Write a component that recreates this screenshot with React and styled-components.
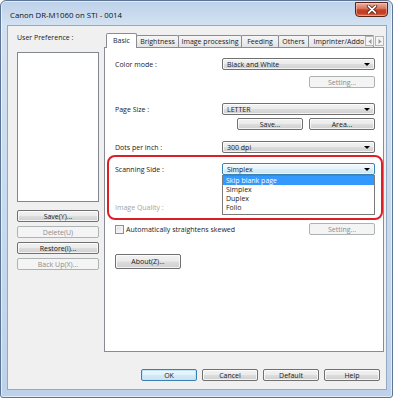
import React from 'react';
import styled, { createGlobalStyle, css } from 'styled-components';

const GlobalStyle = createGlobalStyle`
  html, body {
    margin: 0;
    padding: 0;
    background: #ffffff;
  }
  body {
    font-family: "Open Sans", "Liberation Sans", Arial, sans-serif;
    font-size: 7px;
    color: #1a1a1a;
  }
  * { box-sizing: border-box; }
`;

const Window = styled.div`
  width: 393px;
  height: 398px;
  display: flex;
  flex-direction: column;
  background: linear-gradient(180deg, #bcd1ea 0px, #d3e2f2 24px, #c6d9ee 60%, #bdd2ea 100%);
  border: 1px solid #5d7594;
  border-radius: 6px 6px 3px 3px;
  box-shadow: inset 0 0 0 1px rgba(255, 255, 255, 0.55);
`;

const TitleBar = styled.div`
  height: 24px;
  display: flex;
  align-items: flex-start;
  justify-content: space-between;
  padding: 0 4px 0 9px;
`;

const Title = styled.span`
  margin-top: 7px;
  font-size: 7.8px;
  line-height: 14px;
  color: #111;
`;

const CloseButton = styled.div`
  margin-top: 1px;
  width: 33px;
  height: 15px;
  display: flex;
  align-items: center;
  justify-content: center;
  border: 1px solid #5a2418;
  border-radius: 0 0 4px 4px;
  background: linear-gradient(180deg, #eab2a3 0%, #d8785f 42%, #c5452a 52%, #c23c20 75%, #d96a4c 100%);
  box-shadow: inset 0 0 0 1px rgba(255, 210, 190, 0.5);
`;

const Client = styled.div`
  flex: 1;
  margin: 0 5px 7px 6px;
  background: #f0f0f0;
  border: 1px solid #94a8c0;
  display: flex;
  flex-direction: column;
  padding: 7px 2px 8px 9px;
`;

const TopRow = styled.div`
  flex: 1;
  min-height: 0;
  display: flex;
  gap: 5px;
`;

const LeftColumn = styled.div`
  width: 82px;
  display: flex;
  flex-direction: column;
`;

const PrefLabel = styled.div`
  height: 10px;
  line-height: 10px;
  white-space: nowrap;
`;

const ProfileList = styled.div`
  margin-top: 9px;
  height: 150px;
  background: #fff;
  border: 1px solid #828790;
  margin-bottom: 4px;
`;

const Button = styled.div`
  height: ${p => p.$h || 12}px;
  width: ${p => (p.$w ? `${p.$w}px` : 'auto')};
  display: flex;
  align-items: center;
  justify-content: center;
  border: 1px solid #707070;
  border-radius: 2px;
  background: linear-gradient(180deg, #f2f2f2 0%, #ebebeb 48%, #dddddd 52%, #cfcfcf 100%);
  box-shadow: inset 0 0 0 1px rgba(255, 255, 255, 0.75);
  color: #1a1a1a;
  white-space: nowrap;
  flex-shrink: 0;
  ${p => p.$disabled && css`
    border-color: #adb2b5;
    background: #f4f4f4;
    box-shadow: none;
    color: #8d8d8d;
  `}
  ${p => p.$default && css`
    border-color: #3c7fb1;
    background: linear-gradient(180deg, #eef7fd 0%, #e2f2fb 48%, #d2eaf8 52%, #c6e3f5 100%);
    box-shadow: inset 0 0 0 1px #c3e4f7;
  `}
`;

const SideButton = styled(Button)`
  margin-top: 4px;
`;

const TabControl = styled.div`
  flex: 1;
  display: flex;
  flex-direction: column;
`;

const TabStrip = styled.div`
  position: relative;
  height: 15px;
  display: flex;
  align-items: flex-end;
  overflow: hidden;

  &::after {
    content: '';
    position: absolute;
    left: 0;
    right: 0;
    bottom: 0;
    height: 1px;
    background: #898c95;
  }
`;

const Tab = styled.div`
  position: relative;
  z-index: ${p => (p.$active ? 1 : 0)};
  width: ${p => p.$w}px;
  height: ${p => (p.$active ? 15 : 13)}px;
  margin-left: -1px;
  line-height: ${p => (p.$active ? 13 : 11)}px;
  text-align: center;
  white-space: nowrap;
  flex-shrink: 0;
  border: 1px solid #898c95;
  border-bottom: none;
  border-radius: 2px 2px 0 0;
  background: ${p => (p.$active ? '#fff' : 'linear-gradient(180deg, #f6f6f6 0%, #ececec 50%, #e2e2e2 100%)')};

  &:first-child {
    margin-left: 2px;
  }
`;

const TabArrows = styled.div`
  position: absolute;
  right: 0;
  top: 3px;
  z-index: 2;
  display: flex;
  gap: 1px;
  padding-left: 1px;
  background: #f0f0f0;
`;

const ArrowBox = styled.div`
  width: 9px;
  height: 10px;
  display: flex;
  align-items: center;
  justify-content: center;
  background: #f4f4f4;
  border: 1px solid #b5b5b5;
`;

const Panel = styled.div`
  position: relative;
  flex: 1;
  background: #fff;
  border: 1px solid #898c95;
  border-top: none;
  padding: 10px 8px 0 10px;
  display: flex;
  flex-direction: column;
`;

const FieldRow = styled.div`
  display: flex;
  align-items: center;
  justify-content: ${p => (p.$end ? 'flex-end' : 'space-between')};
  gap: 6px;
  height: ${p => p.$h || 12}px;
  margin-top: ${p => p.$mt || 0}px;
  flex-shrink: 0;
`;

const Label = styled.span`
  flex: 1;
  white-space: nowrap;
  color: ${p => (p.$disabled ? '#a3a3a3' : '#1a1a1a')};
`;

const ComboWrap = styled.div`
  position: relative;
  width: 153px;
  height: 12px;
  flex-shrink: 0;
`;

const Combo = styled.div`
  height: 100%;
  display: flex;
  align-items: center;
  padding: 0 4px;
  border: 1px solid #707070;
  border-radius: 2px;
  background: linear-gradient(180deg, #f2f2f2 0%, #ebebeb 48%, #dddddd 52%, #cfcfcf 100%);
  box-shadow: inset 0 0 0 1px rgba(255, 255, 255, 0.75);
  ${p => p.$open && css`
    border-color: #3c7fb1;
    background: linear-gradient(180deg, #f3f9fd 0%, #e6f3fb 48%, #d8edf9 52%, #cbe6f7 100%);
    box-shadow: inset 0 0 0 1px rgba(255, 255, 255, 0.6);
  `}
  ${p => p.$disabled && css`
    border-color: #adb2b5;
    background: #f4f4f4;
    box-shadow: none;
  `}

  &::after {
    content: '';
    margin-left: auto;
    border-left: 3px solid transparent;
    border-right: 3px solid transparent;
    border-top: 3px solid ${p => (p.$disabled ? '#a0a0a0' : '#000')};
  }
`;

const DropList = styled.div`
  position: absolute;
  top: 100%;
  left: 0;
  right: 0;
  z-index: 3;
  background: #fff;
  border: 1px solid #7a7a7a;
  padding-bottom: 2px;
`;

const DropItem = styled.div`
  height: 9px;
  line-height: 9px;
  padding-left: 3px;
  ${p => p.$selected && css`
    background: #3399ff;
    color: #fff;
  `}
`;

const CheckLine = styled.div`
  display: flex;
  align-items: center;
  gap: 2px;
  flex: 1;
  white-space: nowrap;
`;

const CheckBox = styled.span`
  width: 9px;
  height: 9px;
  border: 1px solid #8e8f8f;
  background: linear-gradient(135deg, #d8d8d8 0%, #f4f4f4 70%, #fff 100%);
  box-shadow: inset 0 0 0 1px #f4f4f4;
`;

const Highlight = styled.div`
  position: absolute;
  left: 2px;
  right: 0;
  top: 107px;
  height: 65px;
  border: 2px solid #dc1f26;
  border-radius: 8px;
  pointer-events: none;
  z-index: 4;
`;

const BottomRow = styled.div`
  margin-top: 17px;
  display: flex;
  justify-content: flex-end;
  gap: 5px;
  padding-right: 4px;
`;

const tabs = [
  { name: 'Basic', w: 31 },
  { name: 'Brightness', w: 43 },
  { name: 'Image processing', w: 64 },
  { name: 'Feeding', w: 38 },
  { name: 'Others', w: 31 },
  { name: 'Imprinter/Addon', w: 66 },
];

const Arrow = ({ dir }) => (
  <svg width="4" height="5" viewBox="0 0 4 5">
    {dir === 'left'
      ? <polygon points="3.5,0 0.5,2.5 3.5,5" fill="#9a9a9a" />
      : <polygon points="0.5,0 3.5,2.5 0.5,5" fill="#9a9a9a" />}
  </svg>
);

const App = () => {
  return (
    <>
      <GlobalStyle />
      <Window>
        <TitleBar>
          <Title>Canon DR-M1060 on STI - 0014</Title>
          <CloseButton>
            <svg width="12" height="9" viewBox="0 0 12 9">
              <path d="M2.5 1.2 L9.5 7.8 M9.5 1.2 L2.5 7.8" stroke="#5b2015" strokeWidth="3.4" strokeLinecap="round" />
              <path d="M2.5 1.2 L9.5 7.8 M9.5 1.2 L2.5 7.8" stroke="#ffffff" strokeWidth="1.8" strokeLinecap="round" />
            </svg>
          </CloseButton>
        </TitleBar>
        <Client>
          <TopRow>
            <LeftColumn>
              <PrefLabel>User Preference :</PrefLabel>
              <ProfileList />
              <SideButton>Save(Y)...</SideButton>
              <SideButton $disabled>Delete(U)</SideButton>
              <SideButton>Restore(I)...</SideButton>
              <SideButton $disabled>Back Up(X)...</SideButton>
            </LeftColumn>
            <TabControl>
              <TabStrip>
                {tabs.map((t, i) => (
                  <Tab key={t.name} $w={t.w} $active={i === 0}>{t.name}</Tab>
                ))}
                <TabArrows>
                  <ArrowBox><Arrow dir="left" /></ArrowBox>
                  <ArrowBox><Arrow dir="right" /></ArrowBox>
                </TabArrows>
              </TabStrip>
              <Panel>
                <FieldRow>
                  <Label>Color mode :</Label>
                  <ComboWrap><Combo>Black and White</Combo></ComboWrap>
                </FieldRow>
                <FieldRow $end $mt={6}>
                  <Button $w={66} $disabled>Setting...</Button>
                </FieldRow>
                <FieldRow $mt={15}>
                  <Label>Page Size :</Label>
                  <ComboWrap><Combo>LETTER</Combo></ComboWrap>
                </FieldRow>
                <FieldRow $end $mt={3}>
                  <Button $w={66}>Save...</Button>
                  <Button $w={66}>Area...</Button>
                </FieldRow>
                <FieldRow $mt={11}>
                  <Label>Dots per inch :</Label>
                  <ComboWrap><Combo>300 dpi</Combo></ComboWrap>
                </FieldRow>
                <FieldRow $mt={10}>
                  <Label>Scanning Side :</Label>
                  <ComboWrap>
                    <Combo $open>Simplex</Combo>
                    <DropList>
                      <DropItem $selected>Skip blank page</DropItem>
                      <DropItem>Simplex</DropItem>
                      <DropItem>Duplex</DropItem>
                      <DropItem>Folio</DropItem>
                    </DropList>
                  </ComboWrap>
                </FieldRow>
                <FieldRow $mt={26}>
                  <Label $disabled>Image Quality :</Label>
                  <ComboWrap><Combo $disabled /></ComboWrap>
                </FieldRow>
                <FieldRow $mt={10}>
                  <CheckLine>
                    <CheckBox />
                    <span>Automatically straightens skewed</span>
                  </CheckLine>
                  <Button $w={66} $disabled>Setting...</Button>
                </FieldRow>
                <FieldRow $mt={19} $h={15}>
                  <Button $w={66} $h={15}>About(Z)...</Button>
                </FieldRow>
                <Highlight />
              </Panel>
            </TabControl>
          </TopRow>
          <BottomRow>
            <Button $w={56} $default>OK</Button>
            <Button $w={56}>Cancel</Button>
            <Button $w={56}>Default</Button>
            <Button $w={56}>Help</Button>
          </BottomRow>
        </Client>
      </Window>
    </>
  );
};

export default App;
